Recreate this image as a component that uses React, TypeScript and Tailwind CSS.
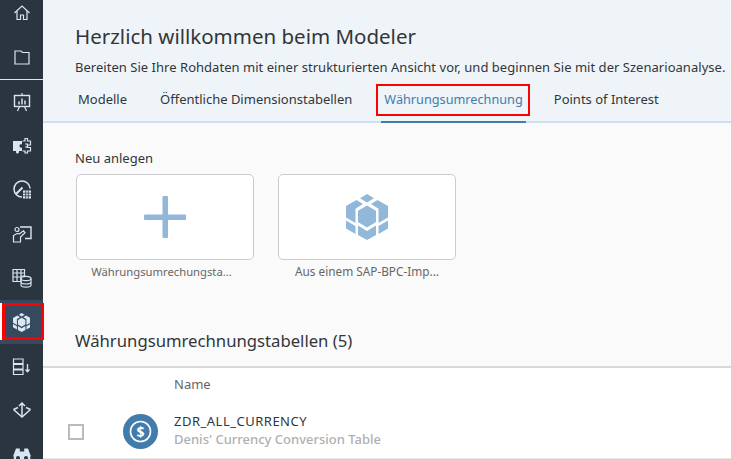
const Ic = ({ children }: { children: React.ReactNode }) => (
  <svg width="20" height="20" viewBox="0 0 20 20" fill="none" stroke="#d8e6f4" strokeWidth="1.2">
    {children}
  </svg>
);

const Cube = ({ size, fill }: { size: number; fill: string }) => (
  <svg width={size * 42 / 46} height={size} viewBox="0 0 42 46" fill={fill}>
    <path d="M21 0l7 4.200-7 4.300-7-4.300z" />
    <path d="M10.500 6L17 10l-7.500 4.800V29L0 23.500V12z" />
    <path d="M31.500 6L25 10l7.500 4.800V29L42 23.500V12z" />
    <path d="M21 11.500l9 5.200V28l-9 5.500-9-5.500V16.700z" />
    <path d="M0 26.500l9.500 5.500v8L0 34.500z" />
    <path d="M42 26.500L32.500 32v8L42 34.500z" />
    <path d="M12 31.500l9 5.500 9-5.500V41l-9 5-9-5z" />
  </svg>
);

const home = <Ic><path d="M2.500 10L10 3l7.500 7" /><path d="M5 8v8.500h3.500V12h3v4.500H15V8" /></Ic>;
const folder = <Ic><path d="M3 4h6l1.500 1.500H17V17H3z" /></Ic>;

const nav = [
  <Ic><rect x="2.500" y="3.500" width="15" height="11" strokeWidth="1.400" /><path d="M10 1v2.500M7.500 14.500L5.500 19M12.500 14.500l2 4.500" /><path d="M7 12.500V9.500M10 12.500V6.500M13 12.500V8.500" strokeWidth="1.500" /></Ic>,
  <Ic><path fill="#d8e6f4" stroke="none" d="M1 5h9v3.500c-1.500-.6-2.500 0-2.500 1.500s1.200 2 2.500 1.500V15H7v1.500C6 18 4.500 18 4 16.500V15H1z" /><path d="M10.500 5h2.500V2.500h2.500V5h3v4h-3v2.500h3V15h-3v2h-2.500v-2h-2.500" /><path d="M13 8h2.500v3H13" /></Ic>,
  <Ic><path d="M10 17A8 8 0 1 1 18 8.500" strokeWidth="1.500" /><path d="M4 14l6.500-6.500" strokeWidth="2" /><rect x="11" y="10.500" width="8" height="8" fill="#d8e6f4" stroke="none" /><path d="M13.700 10.500v8M16.300 10.500v8M11 13.200h8M11 15.800h8" stroke="#2b3540" strokeWidth=".8" /></Ic>,
  <Ic><path d="M8 3h11v11.500h-6" strokeWidth="1.400" /><path d="M1.500 18v-6.500l3.500-2 2.500.3 4-3 1.500 1.800-4.500 4.400v5z" /><circle cx="5" cy="5.500" r="2" /></Ic>,
  <Ic><path d="M1 1.500h11.500V8H9v5.500H1zM1 5h11.500M1 9h8M5 1.500v12M9 1.500V8" /><ellipse cx="14" cy="10.500" rx="5" ry="2.200" /><path d="M9 10.500v6.500c0 1.200 2.200 2.200 5 2.200s5-1 5-2.200v-6.500M9 13.800c0 1.200 2.200 2.200 5 2.200s5-1 5-2.200" /></Ic>,
];

const rest = [
  <Ic><path d="M1.500 3h9.500v4.500H1.500zM1.500 8.500h9.500V13H1.500zM1.500 14h9.500v4.500H1.500z" strokeWidth="1.200" /><path d="M15.500 8v7.500M13.500 13.500l2 2.200 2-2.200" strokeWidth="1.300" /></Ic>,
  <Ic><path d="M10 3v14M7 6l3-3 3 3" strokeWidth="1.500" /><path d="M1.500 9.500l8.500 7.500 8.500-7.500M1.500 9.500L6 7.500M18.500 9.500L14 7.500" strokeWidth="1.500" /></Ic>,
];

export default function App() {
  return (
    <div className="relative flex h-[459px] w-[731px] overflow-hidden bg-white font-['Noto_Sans','Open_Sans',sans-serif] text-[#32363a]">
      <aside className="flex h-full w-[43px] shrink-0 flex-col items-center overflow-hidden bg-[#2b3540]">
        <div className="flex h-[26px] w-full shrink-0 items-center justify-center">{home}</div>
        <div className="flex h-[54px] w-full shrink-0 items-center justify-center border-b border-[#e5e5e5] pt-[9px]">{folder}</div>
        {nav.map((icon, i) => (
          <div key={i} className="flex h-[44px] w-full shrink-0 items-center justify-center">{icon}</div>
        ))}
        <div className="flex h-[44px] w-full shrink-0 items-center justify-center bg-[#354a5f]"><Cube size={19} fill="#dbe7f3" /></div>
        {rest.map((icon, i) => (
          <div key={i} className="flex h-[44px] w-full shrink-0 items-center justify-center">{icon}</div>
        ))}
        <div className="flex h-[44px] w-full shrink-0 items-center justify-center">
          <svg width="20" height="20" viewBox="0 0 20 20" fill="#d8e6f4"><path d="M4 4.500h3.800v3h4.400v-3H16l3 8H1z" /><circle cx="6" cy="14" r="4.300" /><circle cx="14" cy="14" r="4.300" /><circle cx="6" cy="14" r="2" fill="#2b3540" /><circle cx="14" cy="14" r="2" fill="#2b3540" /></svg>
        </div>
      </aside>

      <main className="flex min-w-0 flex-1 flex-col">
        <header className="flex h-[123px] shrink-0 flex-col border-b-2 border-[#d1e0ee] bg-[#eff4f9] pl-[32px]">
          <h1 className="mt-[22px] text-[20.500px] leading-[28px] whitespace-nowrap">Herzlich willkommen beim Modeler</h1>
          <p className="mt-[8px] text-[13px] leading-[18px] tracking-[.03px] whitespace-nowrap">Bereiten Sie Ihre Rohdaten mit einer strukturierten Ansicht vor, und beginnen Sie mit der Szenarioanalyse.</p>
          <nav className="mt-[9px] flex h-[36px] gap-[32px] pl-[3px] text-[13px] leading-[20px] whitespace-nowrap">
            <span className="mr-[1px] pt-[4px]">Modelle</span>
            <span className="pt-[4px]">Öffentliche Dimensionstabellen</span>
            <span className="-ml-[3px] -mr-[4px] h-[38px] border-b-2 border-[#427cac] px-[3px] pt-[4px] text-[12.700px] text-[#427cac]">Währungsumrechnung</span>
            <span className="pt-[4px]">Points of Interest</span>
          </nav>
        </header>

        <section className="h-[243px] shrink-0 bg-[#fafafa] pl-[32px]">
          <p className="mt-[26px] text-[13px] leading-[18px]">Neu anlegen</p>
          <div className="mt-[7px] ml-[1px] flex gap-[24px]">
            <div className="w-[178px]">
              <div className="flex h-[86px] items-center justify-center rounded-[5px] border border-[#ccc] bg-white">
                <svg width="44" height="44" viewBox="0 0 44 44" fill="#91b8d9"><rect x="19.500" y="1" width="5.500" height="42" rx="1" /><rect x="1" y="19.500" width="42" height="5.500" rx="1" /></svg>
              </div>
              <p className="mt-[4px] pr-[7px] text-center text-[11.250px] leading-[15px] text-[#666]">Währungsumrechungsta...</p>
            </div>
            <div className="w-[178px]">
              <div className="flex h-[86px] items-center justify-center rounded-[5px] border border-[#ccc] bg-white">
                <Cube size={46} fill="#91b8d9" />
              </div>
              <p className="mt-[4px] text-center text-[11.800px] leading-[15px] text-[#666]">Aus einem SAP-BPC-Imp...</p>
            </div>
          </div>
          <h2 className="mt-[50px] text-[16.700px] leading-[24px]">Währungsumrechnungstabellen (5)</h2>
        </section>

        <section className="flex-1 border-t-2 border-[#d9d9d9] bg-white">
          <div className="h-[40px] pl-[131px] pt-[7px] text-[13px] leading-[18px] text-[#666]">Name</div>
          <div className="flex h-[51px] items-center border-b border-[#e5e5e5] pb-[3px]">
            <div className="ml-[25px] h-[16px] w-[16px] border-2 border-[#bbb] bg-white" />
            <div className="ml-[39px] flex h-[35px] w-[35px] items-center justify-center rounded-full bg-[#427cac]">
              <svg width="25" height="25" viewBox="0 0 25 25" fill="none" stroke="#fff"><circle cx="12.500" cy="12.500" r="10" strokeWidth="1.600" /><text x="12.500" y="17.500" textAnchor="middle" fill="#fff" stroke="none" fontSize="14" fontWeight="700">$</text></svg>
            </div>
            <div className="mb-[3px] ml-[16px] text-[13px] leading-[18px]">
              <p className="tracking-[.5px] text-[#32363a]">ZDR_ALL_CURRENCY</p>
              <p className="font-medium text-[#b0b0b0]">Denis' Currency Conversion Table</p>
            </div>
          </div>
        </section>
      </main>

      <div className="absolute left-[2px] top-[303px] h-[37px] w-[42px] border-[3px] border-[#ff0000]" />
      <div className="absolute left-0 top-[303px] h-[37px] w-[2px] bg-white" />
      <div className="absolute left-[376px] top-[84px] h-[32px] w-[154px] border-2 border-[#ff0000]" />
    </div>
  );
}
